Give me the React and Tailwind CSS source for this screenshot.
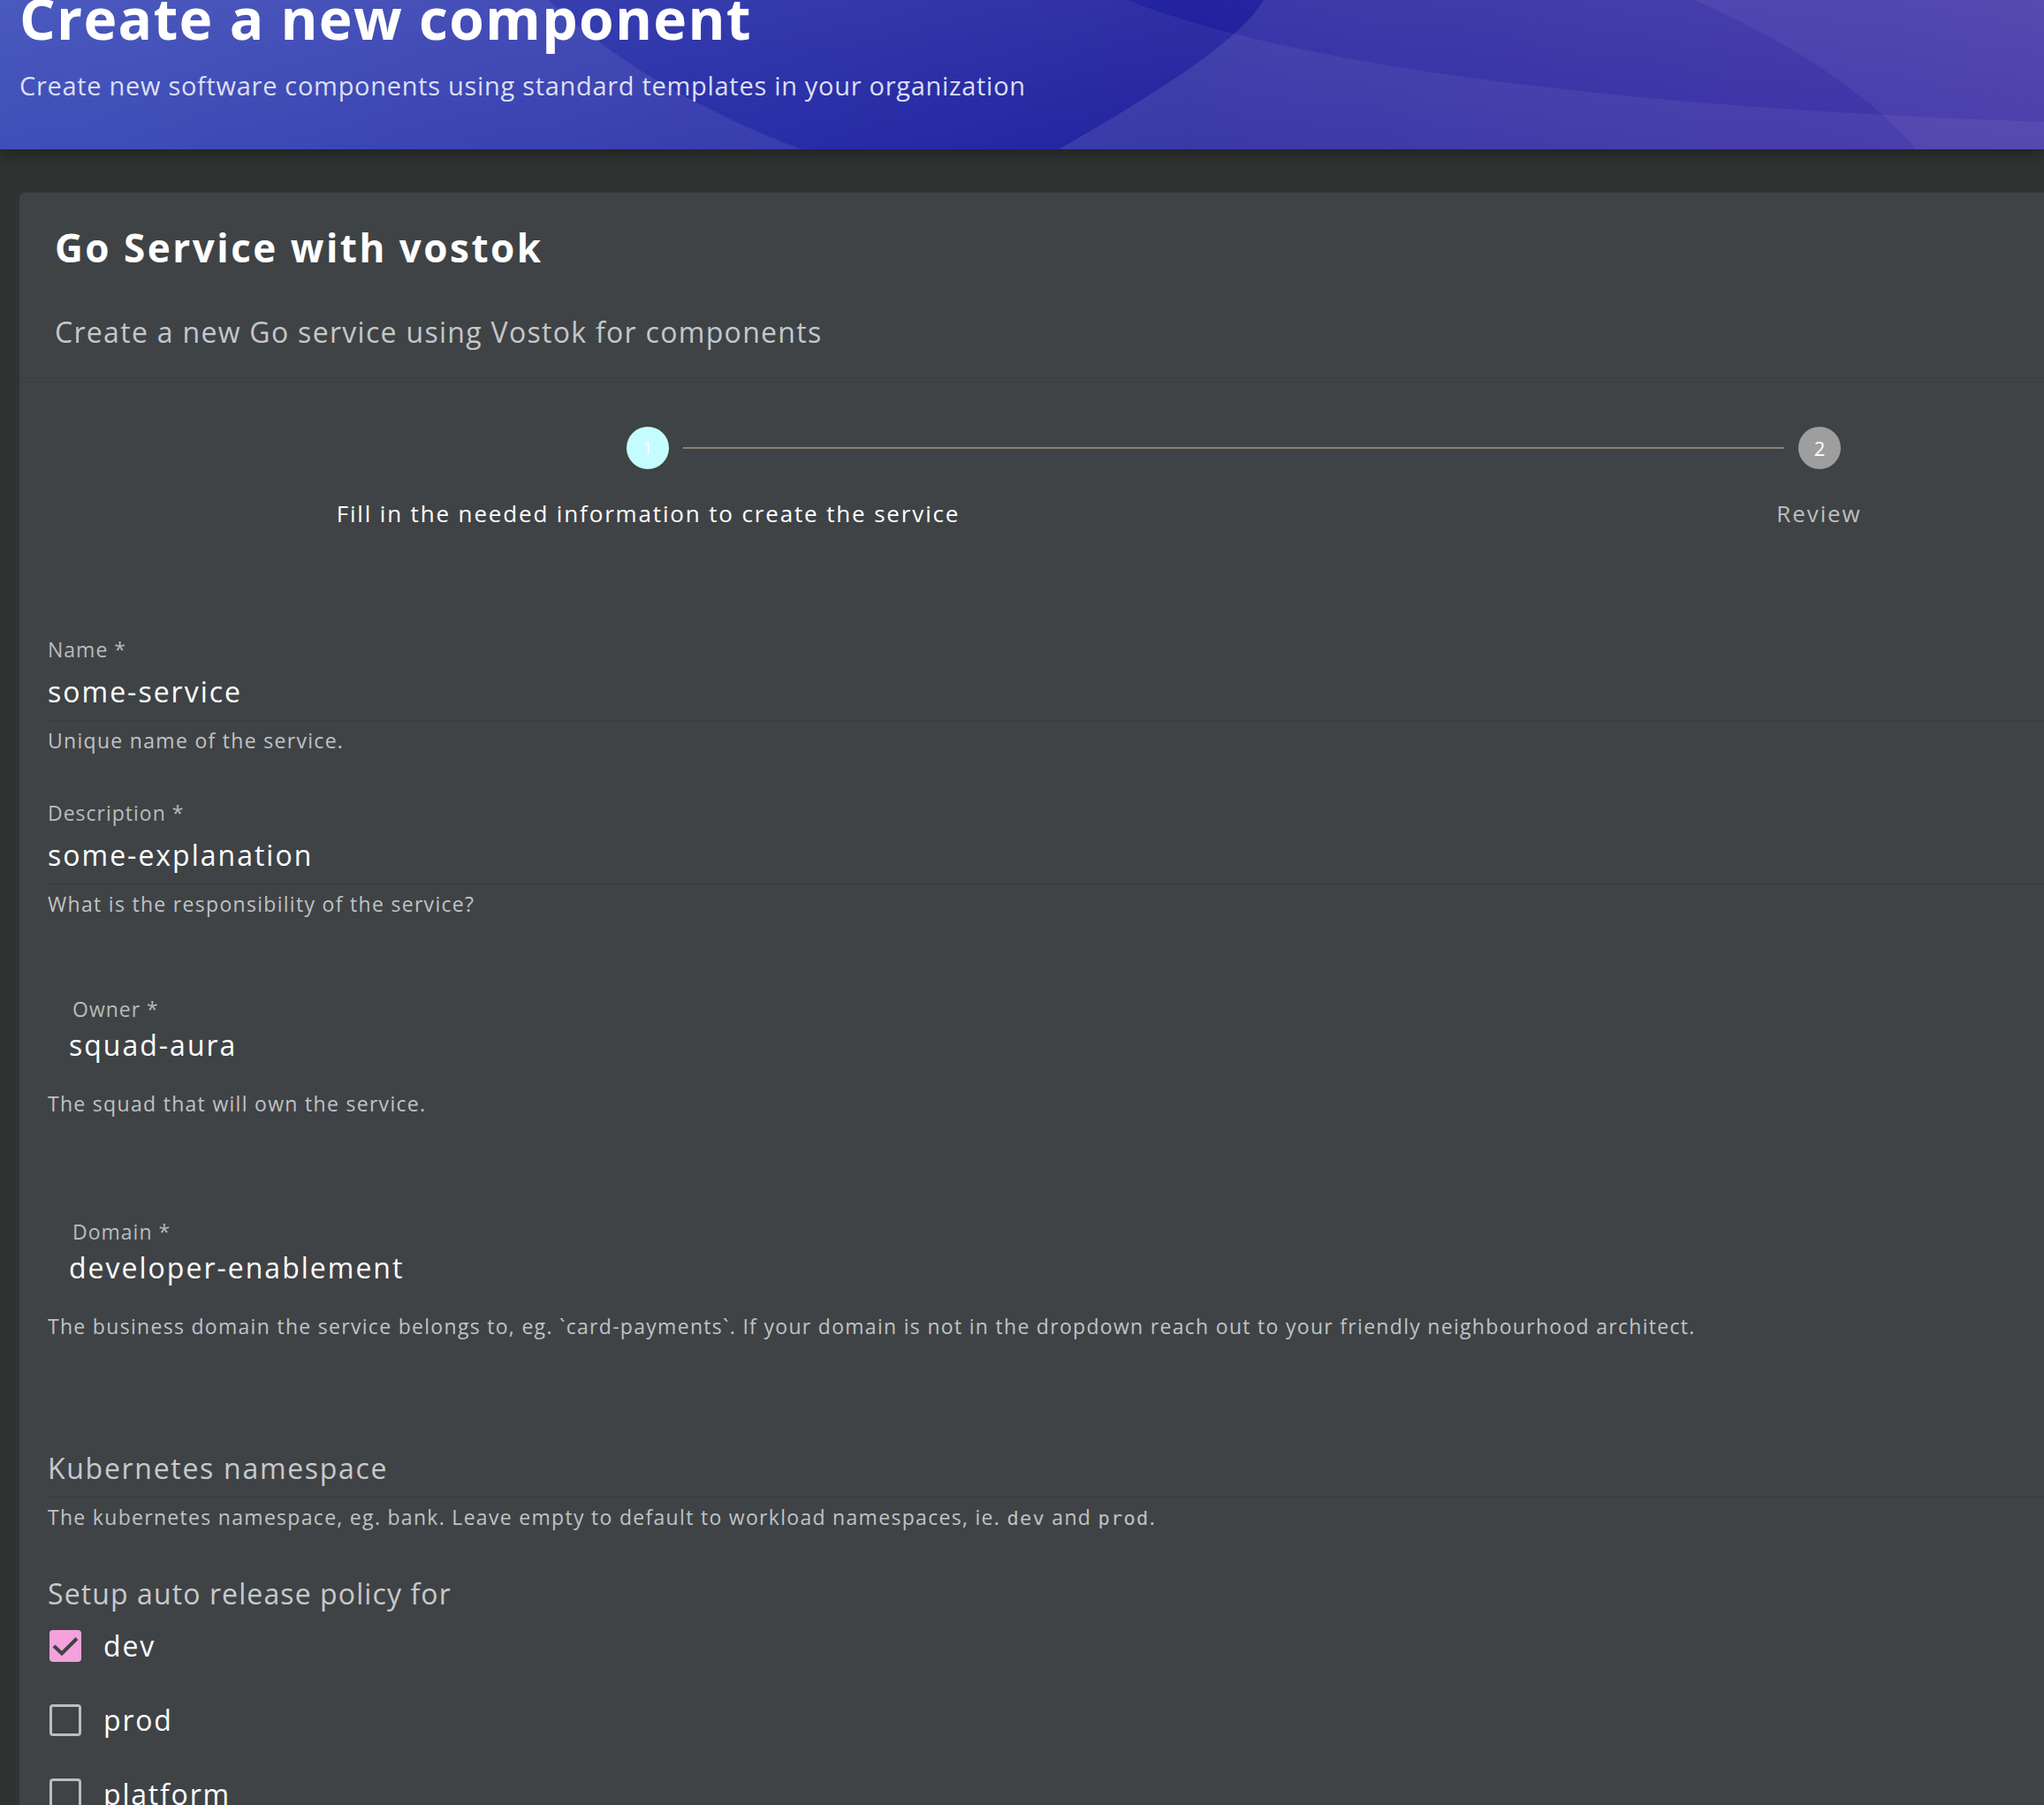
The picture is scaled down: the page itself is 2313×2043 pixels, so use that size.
import React from 'react';

// Fondo del encabezado: degradado con las "olas" superpuestas
function HeaderWaves() {
  return (
    <svg className="absolute inset-0 h-full w-full" viewBox="0 0 2313 169" preserveAspectRatio="none">
      <defs>
        <linearGradient id="hdr" x1="0" y1="0" x2="1" y2="0">
          <stop offset="0" stopColor="#2235b0" />
          <stop offset="0.58" stopColor="#16169a" />
          <stop offset="1" stopColor="#2e1d9e" />
        </linearGradient>
        <linearGradient id="hdrTop" x1="0" y1="0" x2="0" y2="1">
          <stop offset="0" stopColor="#ffffff" stopOpacity="0.06" />
          <stop offset="1" stopColor="#ffffff" stopOpacity="0" />
        </linearGradient>
      </defs>
      <rect width="2313" height="169" fill="url(#hdr)" />
      <path d="M0 0 L1276 0 C1450 70 1800 120 2313 138 L2313 169 L0 169 Z" fill="#ffffff" fillOpacity="0.06" />
      <path d="M1430 0 C1400 50 1300 110 1198 169 L2313 169 L2313 0 Z" fill="#ffffff" fillOpacity="0.1" />
      <path d="M0 0 L620 0 C690 65 790 125 907 169 L0 169 Z" fill="#ffffff" fillOpacity="0.08" />
      <path d="M1917 0 C2010 40 2110 100 2168 169 L2313 169 L2313 0 Z" fill="#ffffff" fillOpacity="0.05" />
      <rect width="2313" height="169" fill="url(#hdrTop)" />
    </svg>
  );
}

function TextField({ label, value, helper, className = '' }) {
  return (
    <div className={className}>
      <div className="border-b border-[#393d40] pb-[12px]">
        <div className="text-[23px] leading-[28px] tracking-[1px] text-[#b9bbbd]">{label}</div>
        <div className="mt-[14px] text-[32px] leading-[40px] tracking-[2px] text-white">{value}</div>
      </div>
      <div className="mt-[8px] text-[23px] leading-[28px] tracking-[1.3px] text-[#c0c2c4]">{helper}</div>
    </div>
  );
}

function SelectField({ label, value, helper, className = '' }) {
  return (
    <div className={className}>
      <div className="pl-[28px] text-[23px] leading-[28px] tracking-[1px] text-[#b9bbbd]">{label}</div>
      <div className="mt-[7px] pl-[24px] text-[32px] leading-[40px] tracking-[2px] text-white">{value}</div>
      <div className="mt-[32px] text-[23px] leading-[28px] tracking-[1.3px] text-[#c0c2c4]">{helper}</div>
    </div>
  );
}

function Checkbox({ label, checked }) {
  return (
    <div className="flex h-[84px] items-center">
      {checked ? (
        <div className="ml-[2px] flex h-[36px] w-[36px] items-center justify-center rounded-[4px] bg-[#f4a1dc]">
          <svg width="36" height="36" viewBox="0 0 36 36">
            <polyline points="5,18 14,26.5 31,9.5" fill="none" stroke="#3f4346" strokeWidth="4" />
          </svg>
        </div>
      ) : (
        <div className="ml-[2px] h-[36px] w-[36px] rounded-[4px] border-[3px] border-[#bdbdbd]" />
      )}
      <span className="ml-[25px] text-[32px] leading-[40px] tracking-[1.8px] text-white">{label}</span>
    </div>
  );
}

export default function App() {
  return (
    <div className="min-h-screen w-full overflow-hidden bg-[#2f3433] font-['Open_Sans',sans-serif]">
      {/* Encabezado */}
      <header className="relative z-10 h-[169px] shadow-[0_6px_16px_rgba(0,0,0,0.35)]">
        <HeaderWaves />
        <div className="relative flex flex-col px-[22px]">
          <h1 className="mt-[-11px] text-[64px] font-bold leading-[64px] tracking-[1.3px] text-white">
            Create a new component
          </h1>
          <p className="mt-[26px] text-[29px] leading-[36px] tracking-[0.7px] text-[#dcdff5]">
            Create new software components using standard templates in your organization
          </p>
        </div>
      </header>

      <main className="pl-[22px] pt-[49px]">
        <div className="w-[2760px] rounded-[6px] bg-[#3f4346] pb-[200px]">
          {/* Cabecera de la tarjeta */}
          <div className="border-b border-[#393d40] px-[40px] pb-[36px] pt-[38px]">
            <h2 className="text-[44px] font-bold leading-[48px] tracking-[2.5px] text-white">Go Service with vostok</h2>
            <p className="mt-[52px] text-[32px] leading-[40px] tracking-[1.3px] text-[#c5c7c9]">
              Create a new Go service using Vostok for components
            </p>
          </div>

          {/* Stepper */}
          <div className="ml-[49px] w-[2650px] pt-[50px]">
            <div className="flex items-center">
              <div className="w-[638px] shrink-0" />
              <div className="flex h-[48px] w-[48px] shrink-0 items-center justify-center rounded-full bg-[#c4fcff] text-[20px] text-white">
                1
              </div>
              <div className="mx-[16px] h-[2px] flex-1 bg-[#8c8276]" />
              <div className="flex h-[48px] w-[48px] shrink-0 items-center justify-center rounded-full bg-[#9e9e9e] text-[22px] text-white">
                2
              </div>
              <div className="w-[638px] shrink-0" />
            </div>
            <div className="mt-[32px] grid grid-cols-2">
              <div className="text-center text-[26px] font-medium leading-[36px] tracking-[1.85px] text-white">
                Fill in the needed information to create the service
              </div>
              <div className="text-center text-[26px] leading-[36px] tracking-[1.9px] text-[#bdbebf]">Review</div>
            </div>
          </div>

          {/* Formulario */}
          <div className="px-[32px] pt-[122px]">
            <TextField label="Name *" value="some-service" helper="Unique name of the service." />
            <TextField
              className="mt-[54px]"
              label="Description *"
              value="some-explanation"
              helper="What is the responsibility of the service?"
            />
            <SelectField
              className="mt-[91px]"
              label="Owner *"
              value="squad-aura"
              helper="The squad that will own the service."
            />
            <SelectField
              className="mt-[117px]"
              label="Domain *"
              value="developer-enablement"
              helper="The business domain the service belongs to, eg. `card-payments`. If your domain is not in the dropdown reach out to your friendly neighbourhood architect."
            />

            <div className="mt-[127px]">
              <div className="border-b border-[#393d40] pb-[12px] text-[32px] leading-[40px] tracking-[1.7px] text-[#c8c9cb]">
                Kubernetes namespace
              </div>
              <div className="mt-[8px] text-[23px] leading-[28px] tracking-[1.3px] text-[#c0c2c4]">
                The kubernetes namespace, eg. bank. Leave empty to default to workload namespaces, ie.{' '}
                <code className="font-['DejaVu_Sans_Mono',monospace] text-[22px] tracking-[1.3px]">dev</code> and{' '}
                <code className="font-['DejaVu_Sans_Mono',monospace] text-[22px] tracking-[1.3px]">prod</code>.
              </div>
            </div>

            <div className="mt-[53px] text-[32px] leading-[36px] tracking-[1.1px] text-[#c8c9cb]">
              Setup auto release policy for
            </div>
            <div className="mt-[-1px] flex flex-col">
              <Checkbox label="dev" checked />
              <Checkbox label="prod" />
              <Checkbox label="platform" />
            </div>
          </div>
        </div>
      </main>
    </div>
  );
}
